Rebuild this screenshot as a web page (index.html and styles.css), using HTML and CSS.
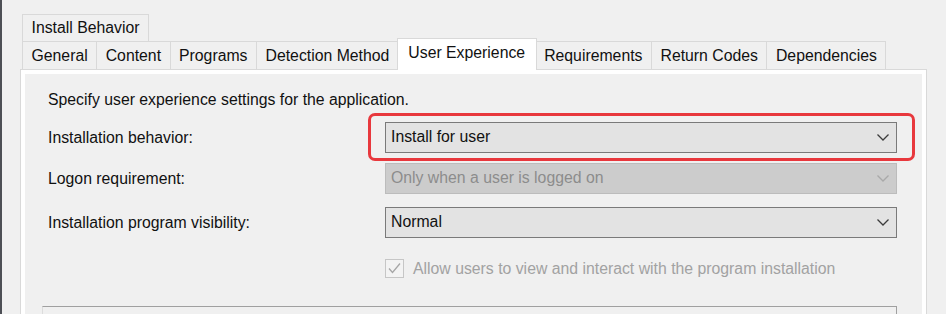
FILE: index.html
```html
<!DOCTYPE html>
<html lang="en">
<head>
  <meta charset="UTF-8">
  <title>User Experience</title>
  <link rel="stylesheet" href="styles.css">
</head>
<body>
  <div class="window">
    <div class="tab-row tab-row-top">
      <div class="tab">Install Behavior</div>
    </div>
    <div class="tab-row">
      <div class="tab">General</div>
      <div class="tab">Content</div>
      <div class="tab">Programs</div>
      <div class="tab">Detection Method</div>
      <div class="tab active">User Experience</div>
      <div class="tab">Requirements</div>
      <div class="tab">Return Codes</div>
      <div class="tab">Dependencies</div>
    </div>
    <div class="panel">
      <div class="page">
        <p class="intro">Specify user experience settings for the application.</p>

        <div class="field">
          <label>Installation behavior:</label>
          <div class="combo-wrap">
            <div class="combo">
              <span>Install for user</span>
              <svg class="chevron" width="12" height="7" viewBox="0 0 12 7"><path d="M0.5 0.5 L6 6 L11.5 0.5" /></svg>
            </div>
            <div class="highlight"></div>
          </div>
        </div>

        <div class="field">
          <label>Logon requirement:</label>
          <div class="combo-wrap">
            <div class="combo disabled">
              <span>Only when a user is logged on</span>
              <svg class="chevron" width="12" height="7" viewBox="0 0 12 7"><path d="M0.5 0.5 L6 6 L11.5 0.5" /></svg>
            </div>
          </div>
        </div>

        <div class="field field-spaced">
          <label>Installation program visibility:</label>
          <div class="combo-wrap">
            <div class="combo">
              <span>Normal</span>
              <svg class="chevron" width="12" height="7" viewBox="0 0 12 7"><path d="M0.5 0.5 L6 6 L11.5 0.5" /></svg>
            </div>
          </div>
        </div>

        <div class="check-row">
          <span class="checkbox">
            <svg width="17" height="17" viewBox="0 0 17 17"><path d="M3 8.5 L6.5 12.5 L14 3.5" /></svg>
          </span>
          <span class="check-label">Allow users to view and interact with the program installation</span>
        </div>

        <div class="group"></div>
      </div>
    </div>
  </div>
</body>
</html>
```

FILE: styles.css
```css
* {
  box-sizing: border-box;
  margin: 0;
  padding: 0;
}
body {
  background: #f0f0f0;
  color: #111;
  font-family: 'Liberation Sans', Arial, sans-serif;
  font-size: 15.8px;
  overflow: hidden;
}
.window {
  height: 314px;
  border-left: 2px solid #4d4f55;
  padding-top: 14px;
}
.tab-row {
  display: flex;
  align-items: flex-end;
  height: 27px;
  margin-left: 20px;
}
.tab-row + .tab-row {
  height: 28px;
}
.tab {
  height: 100%;
  padding: 0 8.5px;
  display: flex;
  align-items: center;
  border: 1px solid #d9d9d9;
  border-bottom: none;
  background: #f0f0f0;
  white-space: nowrap;
}
.tab + .tab {
  margin-left: -1px;
}
.tab.active {
  position: relative;
  z-index: 1;
  height: 32px;
  margin: 0 -2px -1px -2px;
  padding: 0 10.5px 3px;
  background: #fff;
}
.tab.active + .tab {
  margin-left: 0;
}
.panel {
  width: 907px;
  height: 260px;
  margin-left: 18px;
  border: 1px solid #d9d9d9;
  background: #fff;
  padding: 4px;
}
.page {
  height: 100%;
  background: #f0f0f0;
  padding-top: 16px;
  padding-left: 23px;
}
.intro {
  line-height: 20px;
  margin-bottom: 12px;
}
.field {
  display: flex;
  align-items: center;
  height: 31px;
}
.field + .field {
  margin-top: 10px;
}
.field + .field-spaced {
  margin-top: 13px;
}
.field label {
  width: 337px;
}
.combo-wrap {
  position: relative;
  width: 512px;
  height: 31px;
}
.combo {
  height: 100%;
  display: flex;
  align-items: center;
  justify-content: space-between;
  padding: 0 7px 1px 5px;
  background: #e3e3e3;
  border: 1px solid #7a7a7a;
}
.combo .chevron path {
  fill: none;
  stroke: #3c3c3c;
  stroke-width: 1.3;
}
.combo.disabled {
  background: #cccccc;
  border-color: #bcbcbc;
  color: #8c8c8c;
}
.combo.disabled .chevron path {
  stroke: #a9a9a9;
}
.highlight {
  position: absolute;
  top: -9px;
  bottom: -8px;
  left: -17px;
  right: -18px;
  border: 3px solid #e8383d;
  border-radius: 7px;
}
.check-row {
  display: flex;
  align-items: center;
  gap: 9px;
  margin-top: 21px;
  margin-left: 337px;
  height: 19px;
}
.checkbox {
  width: 19px;
  height: 19px;
  border: 1px solid #c6c6c6;
  background: #f3f3f3;
  display: flex;
  align-items: center;
  justify-content: center;
}
.checkbox path {
  fill: none;
  stroke: #a6a6a6;
  stroke-width: 1.3;
}
.check-label {
  color: #a2a2a2;
}
.group {
  width: 855px;
  height: 20px;
  margin-top: 28px;
  margin-left: -6px;
  border: 1px solid #dcdcdc;
  border-top-color: #a0a0a0;
  border-right-color: #a0a0a0;
}
```
